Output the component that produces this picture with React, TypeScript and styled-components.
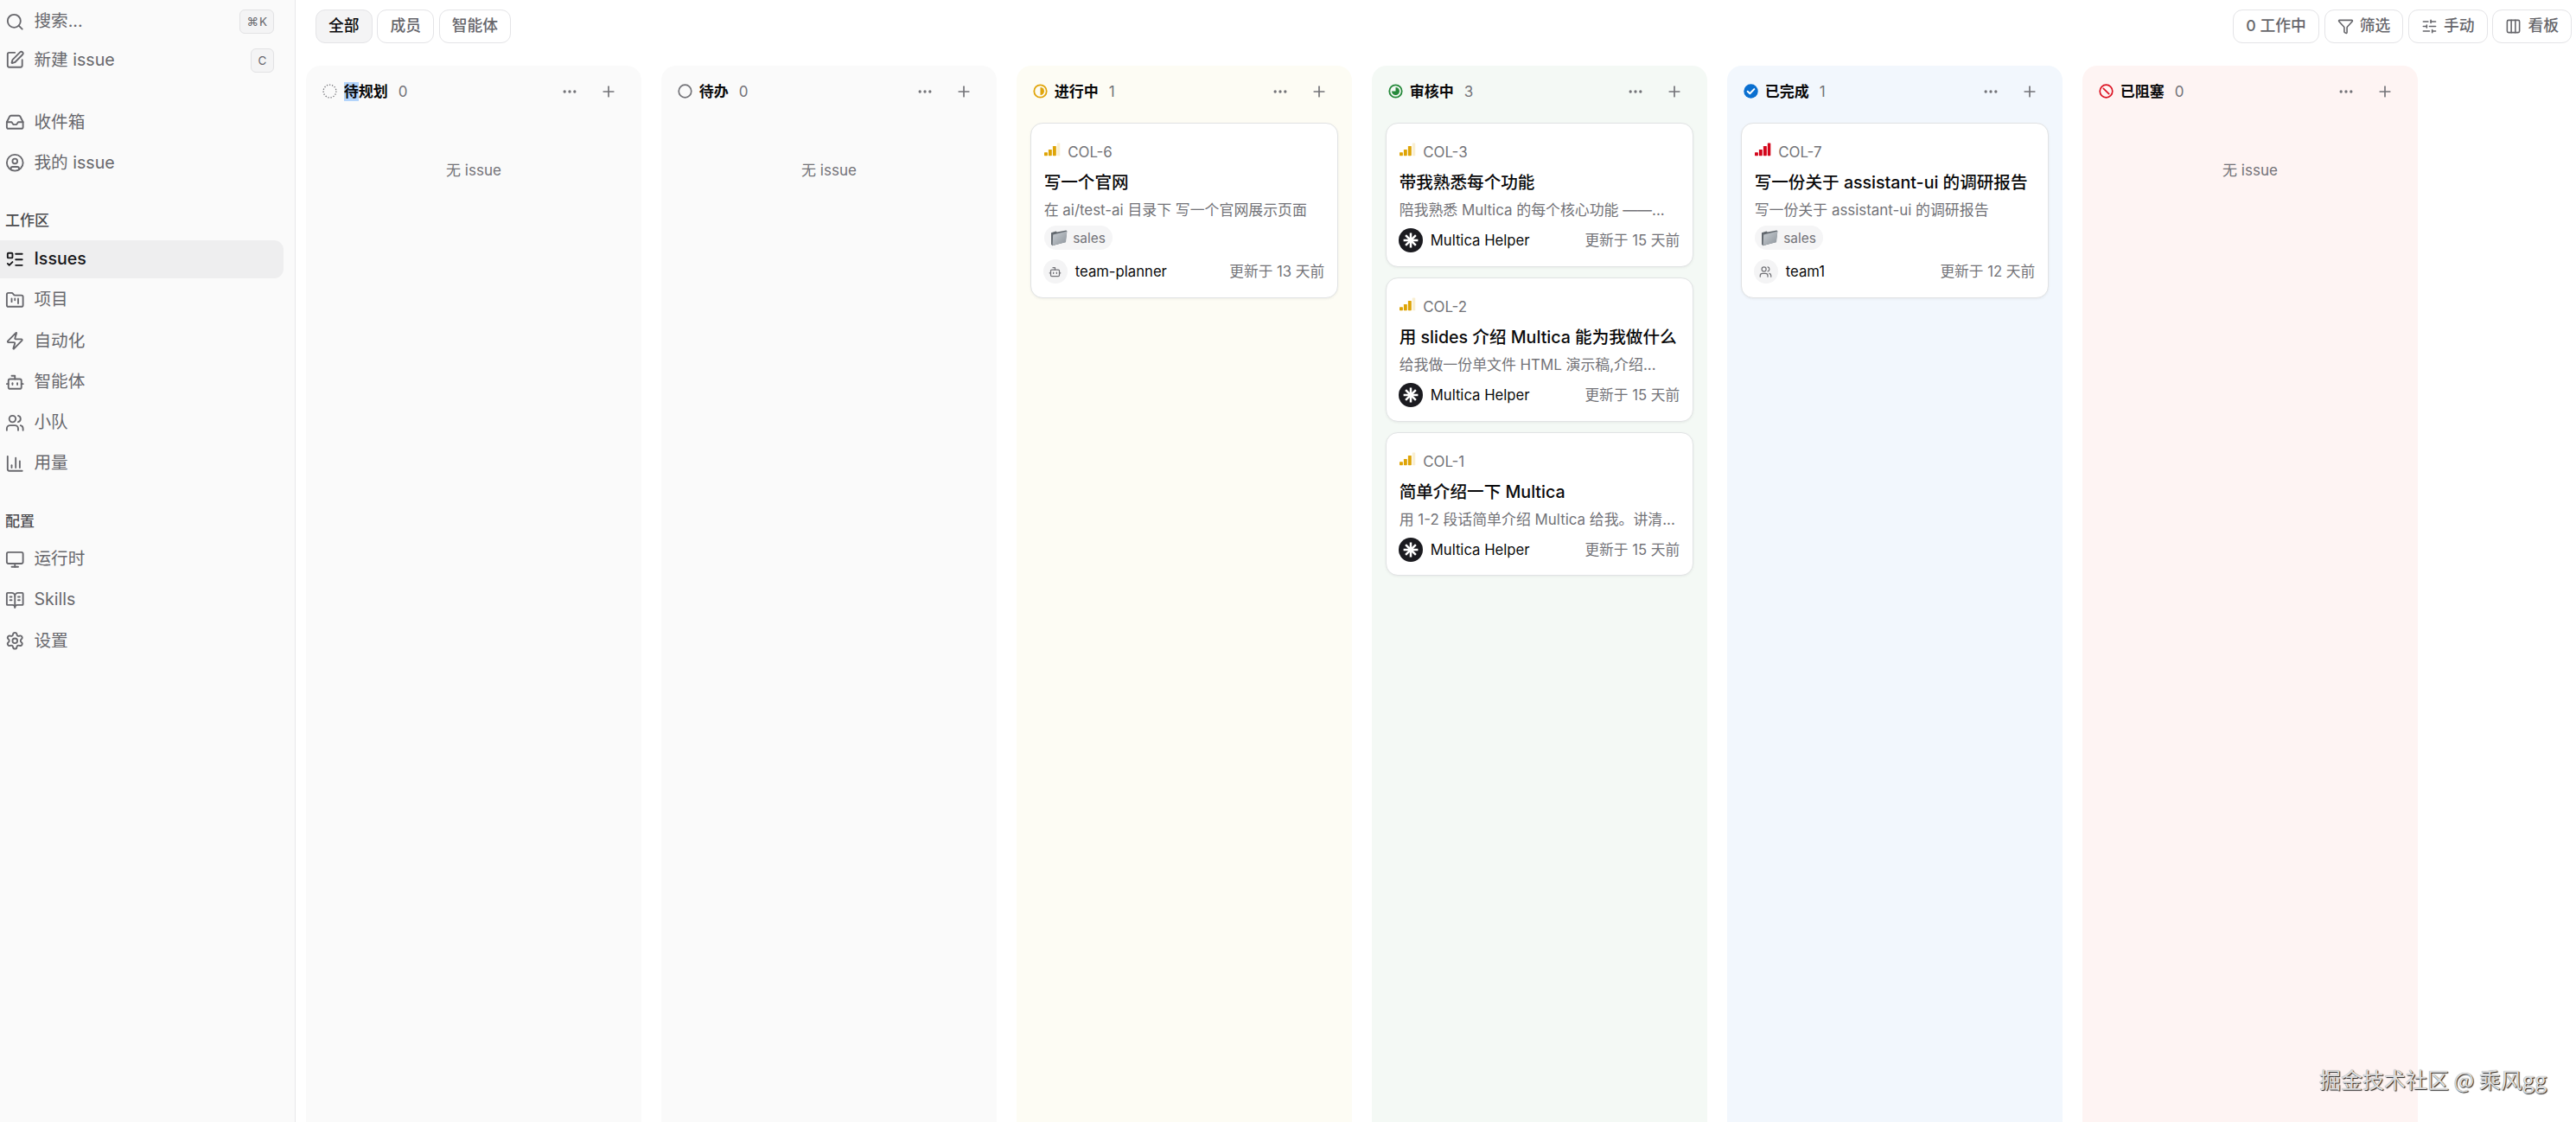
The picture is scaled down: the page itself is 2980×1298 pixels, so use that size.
import React from "react";
import styled, { createGlobalStyle, css } from "styled-components";
import {
  Search, SquarePen, Inbox, CircleUser, ListTodo, FolderKanban, Zap, Bot, Users,
  ChartColumn, Monitor, BookOpenText, Settings, Funnel, SlidersHorizontal,
  Columns3, Ellipsis, Plus, type LucideIcon,
} from "lucide-react";

const Global = createGlobalStyle`
  * { box-sizing: border-box; }
  html, body { margin: 0; padding: 0; background: #fff; }
  body {
    font-family: Inter, "Noto Sans CJK SC", sans-serif;
    color: #0a0a0b;
    overflow: hidden;
  }
`;

const Shell = styled.div`
  display: flex;
  width: 100%;
  height: 1298px;
  overflow: hidden;
`;

const Sidebar = styled.nav`
  flex: none;
  width: 342px;
  padding: 3px 13px 0 0;
  background: #fafafa;
  border-right: 1px solid #e8e8ea;
`;

const NavGroup = styled.div<{ $top?: number; $gap?: number }>`
  display: flex;
  flex-direction: column;
  gap: ${(p) => p.$gap ?? 3.2}px;
  padding-top: ${(p) => p.$top ?? 0}px;
`;

const NavHeading = styled.div`
  height: 24px;
  padding-left: 6px;
  font-size: 17px;
  line-height: 24px;
  font-weight: 500;
  color: #4c4c50;
`;

const NavItem = styled.div<{ $active?: boolean }>`
  display: flex;
  align-items: center;
  height: 44px;
  padding: 0 11px 0 6px;
  gap: 11px;
  border-radius: 0 11px 11px 0;
  font-size: 19.6px;
  color: #68686d;
  svg { flex: none; }
  ${(p) => p.$active && css`
    background: #eeeeef;
    color: #18181b;
    font-weight: 500;
  `}
`;

const NavLabel = styled.span`
  line-height: 28px;
  margin-bottom: 2px;
`;

const Kbd = styled.kbd`
  display: flex;
  align-items: center;
  justify-content: center;
  height: 28px;
  min-width: 27px;
  margin-left: auto;
  padding: 0 6px 0 7px;
  border: 1px solid #e2e2e4;
  border-radius: 6px;
  background: #f4f4f5;
  font-family: Inter, "DejaVu Sans", sans-serif;
  font-size: 13.5px;
  letter-spacing: 1px;
  color: #68686d;
`;

const Main = styled.main`
  display: flex;
  flex-direction: column;
  flex: 1;
  min-width: 0;
`;

const Toolbar = styled.header`
  display: flex;
  justify-content: space-between;
  height: 76px;
  flex: none;
  padding: 11px 5px 0 23px;
`;

const ToolGroup = styled.div`
  display: flex;
  gap: 5.8px;
`;

const ToolButton = styled.button<{ $active?: boolean }>`
  display: flex;
  align-items: center;
  gap: 7px;
  height: 39px;
  padding: 0 14px 1px;
  border: 1px solid #e4e4e7;
  border-radius: 11px;
  background: ${(p) => (p.$active ? "#f4f4f5" : "#fff")};
  color: ${(p) => (p.$active ? "#0a0a0b" : "#66666b")};
  font-family: inherit;
  font-size: 17.8px;
  line-height: 24px;
  font-weight: 500;
`;

const Board = styled.div`
  display: flex;
  flex: 1;
  gap: 23.5px;
  padding-left: 12.2px;
`;

const Column = styled.section<{ $tint: string }>`
  flex: none;
  width: 387.5px;
  padding: 0 16px;
  border-radius: 17px 17px 0 0;
  background: ${(p) => p.$tint};
`;

const ColumnHead = styled.div`
  display: flex;
  align-items: center;
  height: 66px;
  padding: 0 11.5px 7px 2.5px;
  color: #737378;
`;

const ColumnName = styled.span`
  margin-left: 8px;
  font-size: 17px;
  line-height: 22px;
  font-weight: 600;
  color: #0a0a0b;
`;

const Selected = styled.span`
  display: inline-block;
  height: 22px;
  vertical-align: top;
  background: #b3d4fb;
`;

const ColumnCount = styled.span`
  flex: 1;
  margin-left: 12px;
  font-size: 17px;
`;

const HeadActions = styled.div`
  display: flex;
  gap: 25px;
`;

const CardList = styled.div`
  display: flex;
  flex-direction: column;
  gap: 12px;
`;

const EmptyNote = styled.p`
  margin: 43px 0 0;
  text-align: center;
  font-size: 17px;
  line-height: 24px;
  color: #737378;
`;

const Card = styled.article`
  padding: 21px 14.5px 15.8px;
  border: 1px solid #e1e3e4;
  border-radius: 14px;
  background: #fff;
  box-shadow: 0 1px 3px rgba(0, 0, 0, 0.06);
`;

const CardKey = styled.div`
  display: flex;
  align-items: center;
  gap: 8.5px;
  height: 24px;
  font-size: 16.9px;
  color: #737378;
  svg { margin-bottom: 6px; }
`;

const CardTitle = styled.h3`
  margin: 9px 0 0;
  height: 28px;
  font-size: 19.6px;
  line-height: 28px;
  font-weight: 500;
  white-space: nowrap;
`;

const CardText = styled.p`
  margin: 6px 0 0;
  height: 24px;
  font-size: 16.9px;
  line-height: 24px;
  color: #737378;
  white-space: nowrap;
`;

const Tag = styled.div`
  display: flex;
  width: fit-content;
  align-items: center;
  gap: 6.5px;
  height: 28px;
  margin: 6px 0 2px;
  padding: 0 8px 0 7px;
  border-radius: 14px;
  background: #f5f5f6;
  font-size: 15.4px;
  color: #737378;
  & + div { margin-top: 11px; }
`;

const CardFoot = styled.div`
  display: flex;
  align-items: center;
  height: 28px;
  margin-top: 9px;
  font-size: 16.7px;
`;

const Avatar = styled.span<{ $dark?: boolean }>`
  display: grid;
  place-items: center;
  width: 28px;
  height: 28px;
  margin-right: 9px;
  margin-left: -1px;
  border-radius: 50%;
  background: ${(p) => (p.$dark ? "#1b1b20" : "#f4f4f5")};
  color: ${(p) => (p.$dark ? "#fff" : "#737378")};
`;

const Updated = styled.time`
  margin-left: auto;
  margin-bottom: 2px;
  color: #737378;
`;

const Watermark = styled.div`
  position: absolute;
  left: 2683px;
  top: 1230px;
  font-family: "Noto Sans CJK SC", sans-serif;
  font-size: 25px;
  line-height: 36px;
  white-space: nowrap;
  color: #dedede;
  text-shadow: 1px 1px 1px #222, 0 0 1px #888;
`;

type Status = "backlog" | "todo" | "progress" | "review" | "done" | "blocked";

const StatusIcon = ({ status }: { status: Status }) => (
  <svg width="17" height="17" viewBox="0 0 17 17" fill="none">
    {status === "backlog" && (
      <circle cx="8.5" cy="8.5" r="7.4" stroke="#737378" strokeWidth="1.3" strokeDasharray="1.3 1.8" />
    )}
    {status === "todo" && <circle cx="8.5" cy="8.5" r="7.3" stroke="#737378" strokeWidth="1.7" />}
    {status === "progress" && (
      <>
        <circle cx="8.5" cy="8.5" r="7.2" stroke="#e0a50c" strokeWidth="1.8" />
        <path d="M8.5 4a4.5 4.5 0 0 1 0 9z" fill="#e0a50c" />
      </>
    )}
    {status === "review" && (
      <>
        <circle cx="8.5" cy="8.5" r="7.2" stroke="#25893a" strokeWidth="1.8" />
        <path d="M8.5 8.5V4a4.5 4.5 0 1 1-4.5 4.5z" fill="#25893a" />
      </>
    )}
    {status === "done" && (
      <>
        <circle cx="8.5" cy="8.5" r="8.2" fill="#0a6fd0" />
        <path d="M4.7 8.8l2.6 2.5 5-5.2" stroke="#fff" strokeWidth="2" strokeLinecap="round" strokeLinejoin="round" />
      </>
    )}
    {status === "blocked" && (
      <>
        <circle cx="8.5" cy="8.5" r="7.3" stroke="#dc1424" strokeWidth="1.7" />
        <path d="M5.3 5.3l6.4 6.4" stroke="#dc1424" strokeWidth="1.7" strokeLinecap="round" />
      </>
    )}
  </svg>
);

const Priority = ({ urgent }: { urgent?: boolean }) => {
  const c = urgent ? "#d3061b" : "#dea406";
  return (
    <svg width="19" height="16" viewBox="0 0 19 16" fill={c}>
      <rect x="0" y="11.3" width="3.9" height="3.9" rx=".6" />
      <rect x="4.9" y="8" width="3.9" height="7.2" rx=".6" />
      <rect x="9.9" y="4" width="3.9" height="11.2" rx=".6" />
      <rect x="14.8" y="0.5" width="3.5" height="14.7" rx=".6" opacity={urgent ? 1 : 0.18} />
    </svg>
  );
};

const FolderGlyph = () => (
  <svg width="20" height="20" viewBox="0 0 20 20">
    <defs>
      <linearGradient id="folderFace" x1="0" y1="0" x2="1" y2="1">
        <stop offset="0" stopColor="#c9ced3" />
        <stop offset="1" stopColor="#8d949b" />
      </linearGradient>
    </defs>
    <path d="M1 4.2L6.5 2.6l1.3 1 10.6-2.2.9.9L17.6 15 2.4 19.2 1 17.8z" fill="#63696f" />
    <path d="M3.2 6.4L19.4 2.6 18 15.2 2.6 19z" fill="url(#folderFace)" />
  </svg>
);

const Asterisk = () => (
  <svg width="18" height="18" viewBox="0 0 18 18" stroke="#fff" strokeWidth="2.5">
    <path d="M9 .6v16.8M.6 9h16.8M3.1 3.1l11.8 11.8M14.9 3.1L3.1 14.9" />
  </svg>
);

interface Issue {
  id: string;
  title: string;
  text: string;
  tag?: string;
  who: string;
  kind: "helper" | "bot" | "team";
  updated: string;
  urgent?: boolean;
}

const IssueCard = ({ issue }: { issue: Issue }) => (
  <Card>
    <CardKey><Priority urgent={issue.urgent} />{issue.id}</CardKey>
    <CardTitle>{issue.title}</CardTitle>
    <CardText>{issue.text}</CardText>
    {issue.tag && <Tag><FolderGlyph />{issue.tag}</Tag>}
    <CardFoot>
      <Avatar $dark={issue.kind === "helper"}>
        {issue.kind === "helper" && <Asterisk />}
        {issue.kind === "bot" && <Bot size={15} />}
        {issue.kind === "team" && <Users size={15} />}
      </Avatar>
      {issue.who}
      <Updated>{issue.updated}</Updated>
    </CardFoot>
  </Card>
);

const columns: { status: Status; name: string; tint: string; selected?: number; issues: Issue[] }[] = [
  { status: "backlog", name: "待规划", tint: "#fafafa", selected: 1, issues: [] },
  { status: "todo", name: "待办", tint: "#fafafa", issues: [] },
  {
    status: "progress", name: "进行中", tint: "#fdfcf4",
    issues: [{ id: "COL-6", title: "写一个官网", text: "在 ai/test-ai 目录下 写一个官网展示页面", tag: "sales", who: "team-planner", kind: "bot", updated: "更新于 13 天前" }],
  },
  {
    status: "review", name: "审核中", tint: "#f4f9f5",
    issues: [
      { id: "COL-3", title: "带我熟悉每个功能", text: "陪我熟悉 Multica 的每个核心功能 ——...", who: "Multica Helper", kind: "helper", updated: "更新于 15 天前" },
      { id: "COL-2", title: "用 slides 介绍 Multica 能为我做什么", text: "给我做一份单文件 HTML 演示稿,介绍...", who: "Multica Helper", kind: "helper", updated: "更新于 15 天前" },
      { id: "COL-1", title: "简单介绍一下 Multica", text: "用 1-2 段话简单介绍 Multica 给我。讲清...", who: "Multica Helper", kind: "helper", updated: "更新于 15 天前" },
    ],
  },
  {
    status: "done", name: "已完成", tint: "#f2f7fd",
    issues: [{ id: "COL-7", title: "写一份关于 assistant-ui 的调研报告", text: "写一份关于 assistant-ui 的调研报告", tag: "sales", who: "team1", kind: "team", updated: "更新于 12 天前", urgent: true }],
  },
  { status: "blocked", name: "已阻塞", tint: "#fef4f3", issues: [] },
];

const Nav = ({ icon: Icon, label, kbd, active }: { icon: LucideIcon; label: string; kbd?: string; active?: boolean }) => (
  <NavItem $active={active}>
    <Icon size={22.5} />
    <NavLabel>{label}</NavLabel>
    {kbd && <Kbd>{kbd}</Kbd>}
  </NavItem>
);

export default function App() {
  return (
    <>
      <Global />
      <Shell>
        <Sidebar>
          <NavGroup $gap={0.5}>
            <Nav icon={Search} label="搜索..." kbd="⌘K" />
            <Nav icon={SquarePen} label="新建 issue" kbd="C" />
          </NavGroup>
          <NavGroup $top={28}>
            <Nav icon={Inbox} label="收件箱" />
            <Nav icon={CircleUser} label="我的 issue" />
          </NavGroup>
          <NavGroup $top={32}>
            <NavHeading>工作区</NavHeading>
          </NavGroup>
          <NavGroup $top={11.5}>
            <Nav icon={ListTodo} label="Issues" active />
            <Nav icon={FolderKanban} label="项目" />
            <Nav icon={Zap} label="自动化" />
            <Nav icon={Bot} label="智能体" />
            <Nav icon={Users} label="小队" />
            <Nav icon={ChartColumn} label="用量" />
          </NavGroup>
          <NavGroup $top={33}>
            <NavHeading>配置</NavHeading>
          </NavGroup>
          <NavGroup $top={10}>
            <Nav icon={Monitor} label="运行时" />
            <Nav icon={BookOpenText} label="Skills" />
            <Nav icon={Settings} label="设置" />
          </NavGroup>
        </Sidebar>
        <Main>
          <Toolbar>
            <ToolGroup>
              <ToolButton $active>全部</ToolButton>
              <ToolButton>成员</ToolButton>
              <ToolButton>智能体</ToolButton>
            </ToolGroup>
            <ToolGroup>
              <ToolButton>0 工作中</ToolButton>
              <ToolButton><Funnel size={19} />筛选</ToolButton>
              <ToolButton><SlidersHorizontal size={19} />手动</ToolButton>
              <ToolButton><Columns3 size={19} />看板</ToolButton>
            </ToolGroup>
          </Toolbar>
          <Board>
            {columns.map((col) => (
              <Column key={col.status} $tint={col.tint}>
                <ColumnHead>
                  <StatusIcon status={col.status} />
                  <ColumnName>
                    {col.selected ? <Selected>{col.name.slice(0, col.selected)}</Selected> : null}
                    {col.name.slice(col.selected ?? 0)}
                  </ColumnName>
                  <ColumnCount>{col.issues.length}</ColumnCount>
                  <HeadActions>
                    <Ellipsis size={20} />
                    <Plus size={20} />
                  </HeadActions>
                </ColumnHead>
                {col.issues.length === 0 ? (
                  <EmptyNote>无 issue</EmptyNote>
                ) : (
                  <CardList>
                    {col.issues.map((issue) => <IssueCard key={issue.id} issue={issue} />)}
                  </CardList>
                )}
              </Column>
            ))}
          </Board>
        </Main>
        <Watermark>掘金技术社区 @ 乘风gg</Watermark>
      </Shell>
    </>
  );
}
